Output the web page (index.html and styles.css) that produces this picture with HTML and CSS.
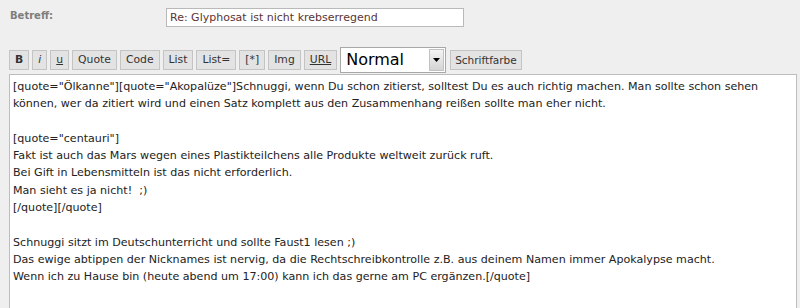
FILE: index.html
```html
<!DOCTYPE html>
<html lang="de">
<head>
<meta charset="utf-8">
<link rel="stylesheet" href="styles.css">
</head>
<body>
<div class="page">
  <div class="subject-row">
    <div class="label">Betreff:</div>
    <div class="subject">Re: Glyphosat ist nicht krebserregend</div>
  </div>
  <div class="toolbar">
    <span class="btn b">B</span>
    <span class="btn i">i</span>
    <span class="btn u">u</span>
    <span class="btn">Quote</span>
    <span class="btn">Code</span>
    <span class="btn">List</span>
    <span class="btn">List=</span>
    <span class="btn">[*]</span>
    <span class="btn">Img</span>
    <span class="btn u">URL</span>
    <span class="select"><span class="sel-text">Normal</span><span class="sel-arrow"><svg width="7" height="4" viewBox="0 0 7 4"><path d="M0 0h7L3.5 4z" fill="#000"/></svg></span></span>
    <span class="btn color">Schriftfarbe</span>
  </div>
  <div class="editor">
    <div class="line">[quote="Ölkanne"][quote="Akopalüze"]Schnuggi, wenn Du schon zitierst, solltest Du es auch richtig machen. Man sollte schon sehen</div>
    <div class="line">können, wer da zitiert wird und einen Satz komplett aus den Zusammenhang reißen sollte man eher nicht.</div>
    <div class="line">&nbsp;</div>
    <div class="line">[quote="centauri"]</div>
    <div class="line">Fakt ist auch das Mars wegen eines Plastikteilchens alle Produkte weltweit zurück ruft.</div>
    <div class="line">Bei Gift in Lebensmitteln ist das nicht erforderlich.</div>
    <div class="line">Man sieht es ja nicht!&nbsp; ;)</div>
    <div class="line">[/quote][/quote]</div>
    <div class="line">&nbsp;</div>
    <div class="line">Schnuggi sitzt im Deutschunterricht und sollte Faust1 lesen ;)</div>
    <div class="line">Das ewige abtippen der Nicknames ist nervig, da die Rechtschreibkontrolle z.B. aus deinem Namen immer Apokalypse macht.</div>
    <div class="line">Wenn ich zu Hause bin (heute abend um 17:00) kann ich das gerne am PC ergänzen.[/quote]</div>
  </div>
</div>
</body>
</html>
```
FILE: styles.css
```css
html, body {
  margin: 0;
  padding: 0;
  background: #efefef;
  height: 308px;
  overflow: hidden;
}
.page {
  padding: 8px 3px 0 9px;
  font-family: "DejaVu Sans", Verdana, sans-serif;
}
.subject-row {
  display: flex;
  align-items: flex-start;
}
.label {
  width: 156px;
  font-weight: bold;
  font-size: 10px;
  color: #7d7d7d;
  padding: 2px 0 0 1px;
}
.subject {
  box-sizing: border-box;
  width: 298px;
  height: 19px;
  background: #fff;
  border: 1px solid #b9b9b9;
  font-size: 11px;
  line-height: 17px;
  padding-left: 3px;
  color: #5b3434;
}
.toolbar {
  display: flex;
  align-items: center;
  gap: 3px;
  margin-top: 20px;
  height: 26px;
}
.btn {
  box-sizing: border-box;
  height: 20px;
  line-height: 18px;
  border: 1px solid #c4c4c4;
  background: #e3e3e3;
  font-size: 10.8px;
  color: #333;
  padding: 0 5px;
}
.btn.b { font-weight: bold; }
.btn.i { font-style: italic; }
.btn.u { text-decoration: underline; }
.select {
  box-sizing: border-box;
  display: flex;
  align-items: stretch;
  width: 106px;
  height: 26px;
  background: #fff;
  border: 1px solid #a8a8a8;
}
.sel-text {
  flex: 1;
  font-size: 16px;
  line-height: 24px;
  padding-left: 5px;
  color: #000;
}
.sel-arrow {
  width: 13px;
  margin: 1px;
  background: linear-gradient(#f4f4f4, #d4d4d4);
  border: 1px solid #c2c2c2;
  display: flex;
  align-items: center;
  justify-content: center;
}
.btn.color {
  margin-left: 1px;
  font-size: 10.5px;
  padding: 0 4px;
}
.editor {
  box-sizing: border-box;
  margin-top: 1px;
  height: 260px;
  background: #fff;
  border: 1px solid #bdbdbd;
  padding: 3px 3px 0 3px;
  font-size: 11.1px;
  line-height: 17.3px;
  color: #222;
}
.line {
  white-space: nowrap;
}
```
